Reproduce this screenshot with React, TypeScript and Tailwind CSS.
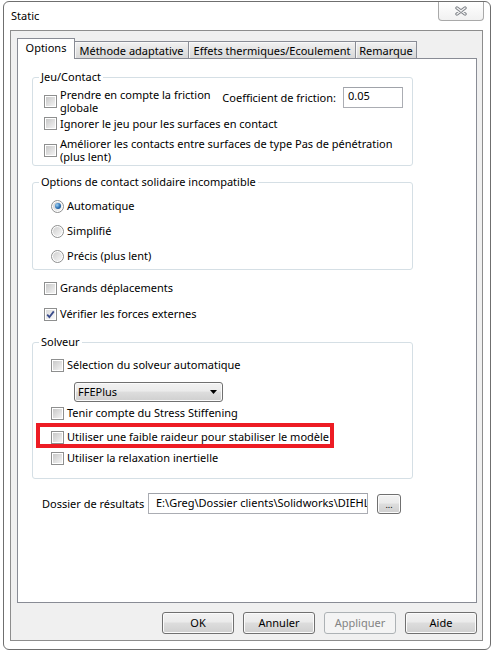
import React from 'react';

const CheckBox = ({ checked = false }: { checked?: boolean }) => (
  <span className="relative flex size-[13px] shrink-0 border border-[#8e8f8f] bg-white p-px">
    <span
      className={`size-full ${
        checked
          ? 'bg-[linear-gradient(135deg,#dcdcdc,#fafafa)]'
          : 'bg-[linear-gradient(135deg,#c8c8c8,#f3f3f3)]'
      }`}
    />
    {checked && (
      <svg className="absolute left-0 top-0" width="11" height="11" viewBox="0 0 11 11">
        <path d="M2.2 5.6 L4.4 8 L8.8 2.4" fill="none" stroke="#3b4d8c" strokeWidth="1.8" />
      </svg>
    )}
  </span>
);

const Radio = ({ checked = false }: { checked?: boolean }) => (
  <span className="flex size-[13px] shrink-0 rounded-full border border-[#8e8f8f] bg-white p-px">
    <span className="flex size-full items-center justify-center rounded-full bg-[linear-gradient(135deg,#cfcfcf,#f7f7f7)]">
      {checked && (
        <span className="size-[6px] rounded-full bg-[radial-gradient(circle_at_35%_35%,#9fd3f5,#2b6fb3_55%,#163f6e)]" />
      )}
    </span>
  </span>
);

const Group = ({
  title,
  className,
  inner,
  children,
}: {
  title: string;
  className: string;
  inner: string;
  children: React.ReactNode;
}) => (
  <fieldset className={`w-[381px] rounded-[3px] border border-[#d5dfe5] ${className}`}>
    <legend className="ml-[6px] px-[2px] leading-[14px]">{title}</legend>
    <div className={inner}>{children}</div>
  </fieldset>
);

const CheckRow = ({
  label,
  checked,
  className = '',
}: {
  label: string;
  checked?: boolean;
  className?: string;
}) => (
  <div className={`flex h-[16px] items-center gap-[3px] ${className}`}>
    <CheckBox checked={checked} />
    <span className="whitespace-nowrap leading-[14px]">{label}</span>
  </div>
);

const RadioRow = ({ label, checked, className = '' }: { label: string; checked?: boolean; className?: string }) => (
  <div className={`flex h-[16px] items-center gap-[3px] ${className}`}>
    <Radio checked={checked} />
    <span className="leading-[14px]">{label}</span>
  </div>
);

const Button = ({ label, disabled = false }: { label: string; disabled?: boolean }) => (
  <div
    className={`flex h-[22px] w-[72px] items-center justify-center rounded-[3px] border ${
      disabled
        ? 'border-[#adb2b5] bg-[#f4f4f4] text-[#838383]'
        : 'border-[#707070] bg-[linear-gradient(#f2f2f2_0%,#ebebeb_45%,#dddddd_50%,#cfcfcf_100%)] shadow-[inset_0_0_0_1px_#fbfbfb]'
    }`}
  >
    {label}
  </div>
);

export default function App() {
  return (
    <div className="h-[651px] w-[493px] bg-white pl-[3px] pt-[1px] font-['Noto_Sans',sans-serif] text-[11px] text-black">
      <div className="flex h-[649px] w-[488px] flex-col rounded-[6px] border border-[#6f6f6f] bg-white pb-[8px] pl-[6px] pr-[7px]">
        {/* title bar */}
        <div className="flex h-[28px] items-start">
          <span className="pl-px pt-[7px] leading-[14px]">Static</span>
          <div className="ml-auto mr-[-1px] flex h-[19px] w-[46px] items-center justify-center rounded-b-[4px] border border-t-0 border-[#a9a9a9] bg-[linear-gradient(#ffffff,#f1f1f1)]">
            <svg width="14" height="10" viewBox="0 0 14 10">
              <path d="M3 2 L11 8 M11 2 L3 8" stroke="#7d8187" strokeWidth="3.4" strokeLinecap="round" />
              <path d="M3 2 L11 8 M11 2 L3 8" stroke="#f4f4f4" strokeWidth="1.4" strokeLinecap="round" />
            </svg>
          </div>
        </div>

        {/* client area */}
        <div className="flex h-[611px] flex-col border border-[#8d8d8d] bg-[#f0f0f0] pl-[6px] pr-[5px] pt-[7px]">
          {/* tabs */}
          <div className="flex h-[20px] items-end">
            <div className="relative z-10 mb-[-1px] flex h-[21px] w-[58px] justify-center border border-b-0 border-[#898c95] bg-white pt-[2px] leading-[14px]">
              Options
            </div>
            {[
              ['Méthode adaptative', 'w-[115px] -ml-px'],
              ['Effets thermiques/Ecoulement', 'w-[168px] -ml-px'],
              ['Remarque', 'w-[62px] -ml-px'],
            ].map(([t, w]) => (
              <div
                key={t}
                className={`flex h-[17px] justify-center border border-b-0 border-[#898c95] bg-[linear-gradient(#f2f2f2,#e4e4e4_50%,#d8d8d8)] pt-[2px] leading-[14px] shadow-[inset_1px_1px_0_#f8f8f8] ${w}`}
              >
                {t}
              </div>
            ))}
          </div>

          {/* tab panel */}
          <div className="h-[545px] border border-[#898c95] bg-white pl-[14px]">
            <Group title="Jeu/Contact" className="mt-[11px]" inner="pb-[2px] pl-[11px] pr-[9px]">
              <div className="mt-[3px] flex items-start justify-between">
                <div className="mt-px flex items-center gap-[3px]">
                  <CheckBox />
                  <span className="leading-[13px]">
                    Prendre en compte la friction
                    <br />
                    globale
                  </span>
                </div>
                <div className="flex items-center gap-[7px]">
                  <span className="leading-[14px]">Coefficient de friction:</span>
                  <div className="h-[21px] w-[60px] border border-[#abadb3] border-t-[#a0a3aa] bg-white pl-[4px] pt-px leading-[14px]">
                    0.05
                  </div>
                </div>
              </div>
              <div className="mt-[3px] flex h-[13px] items-center gap-[3px]">
                <CheckBox />
                <span className="leading-[13px]">Ignorer le jeu pour les surfaces en contact</span>
              </div>
              <div className="mt-[7px] flex items-center gap-[3px]">
                <CheckBox />
                <span className="leading-[13px]">
                  Améliorer les contacts entre surfaces de type Pas de pénétration
                  <br />
                  (plus lent)
                </span>
              </div>
            </Group>

            <Group
              title="Options de contact solidaire incompatible"
              className="mt-[9px]"
              inner="pb-[5px] pl-[18px]"
            >
              <RadioRow label="Automatique" checked className="mt-[9px]" />
              <RadioRow label="Simplifié" className="mt-[9px]" />
              <RadioRow label="Précis (plus lent)" className="mt-[9px]" />
            </Group>

            <div className="pl-[12px]">
              <CheckRow label="Grands déplacements" className="mt-[10px]" />
              <CheckRow label="Vérifier les forces externes" checked className="mt-[10px]" />
            </div>

            <Group title="Solveur" className="mt-[13px]" inner="pb-[12px] pl-[18px]">
              <CheckRow label="Sélection du solveur automatique" className="mt-[8px]" />
              <div className="ml-[23px] mt-[9px] flex h-[20px] w-[149px] items-center justify-between rounded-[3px] border border-[#707070] bg-[linear-gradient(#f2f2f2_0%,#ebebeb_45%,#dddddd_50%,#cfcfcf_100%)] pl-[3px] pr-[5px] shadow-[inset_0_0_0_1px_#fbfbfb]">
                <span className="leading-[14px]">FFEPlus</span>
                <svg width="7" height="4" viewBox="0 0 7 4">
                  <path d="M0 0 H7 L3.5 4 Z" fill="#000" />
                </svg>
              </div>
              <CheckRow label="Tenir compte du Stress Stiffening" className="mt-[3px]" />
              <div className="relative mt-[8px] flex h-[16px] items-center gap-[3px]">
                <span className="pointer-events-none absolute -left-[15px] -top-[6px] h-[25px] w-[298px] border-4 border-[#ed1c24]" />
                <CheckBox />
                <span className="whitespace-nowrap leading-[14px]">
                  Utiliser une faible raideur pour stabiliser le modèle
                </span>
              </div>
              <CheckRow label="Utiliser la relaxation inertielle" className="mt-[5px]" />
            </Group>

            <div className="ml-[10px] mt-[14px] flex h-[21px] items-center">
              <span className="w-[106px] leading-[14px]">Dossier de résultats</span>
              <div className="h-[21px] w-[220px] overflow-hidden whitespace-nowrap border border-[#abadb3] border-t-[#a0a3aa] bg-white pl-[7px] pt-[2px] leading-[14px]">
                E:\Greg\Dossier clients\Solidworks\DIEHL\Projet
              </div>
              <div className="ml-[9px] flex h-[20px] w-[24px] items-end justify-center rounded-[3px] border border-[#707070] bg-[linear-gradient(#f2f2f2_0%,#ebebeb_45%,#dddddd_50%,#cfcfcf_100%)] pb-[3px] text-[9px] leading-[10px] shadow-[inset_0_0_0_1px_#fbfbfb]">
                ...
              </div>
            </div>
          </div>

          {/* dialog buttons */}
          <div className="mt-[9px] flex justify-end gap-[9px]">
            <Button label="OK" />
            <Button label="Annuler" />
            <Button label="Appliquer" disabled />
            <Button label="Aide" />
          </div>
        </div>
      </div>
    </div>
  );
}
